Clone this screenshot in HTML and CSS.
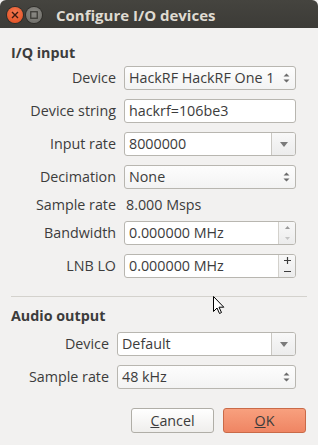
FILE: index.html
```html
<!DOCTYPE html>
<html lang="en">
<head>
    <meta charset="UTF-8">
    <title>Configure I/O devices</title>
    <link rel="stylesheet" href="styles.css">
</head>
<body>
    <div class="titlebar">
        <span class="wbtn wbtn-close">
            <svg width="8" height="8" viewBox="0 0 8 8"><path d="M1 1L7 7M7 1L1 7" stroke="#3a1a10" stroke-width="1.4"/></svg>
        </span>
        <span class="wbtn wbtn-max">
            <svg width="8" height="8" viewBox="0 0 8 8"><rect x="0.75" y="0.75" width="6.5" height="6.5" fill="none" stroke="#3c3b37" stroke-width="1.3"/></svg>
        </span>
        <span class="title">Configure I/O devices</span>
    </div>

    <div class="dialog">
        <section class="group">
            <h2>I/Q input</h2>
            <div class="form form-iq">
                <label>Device</label>
                <div class="field combo">
                    <span class="value">HackRF HackRF One 1</span>
                    <span class="updown">
                        <svg width="7" height="12" viewBox="0 0 7 12"><path d="M0.5 4.5L3.5 1.5L6.5 4.5Z M0.5 7.5L3.5 10.5L6.5 7.5Z" fill="#6b6b6b"/></svg>
                    </span>
                </div>

                <label>Device string</label>
                <div class="field entry"><span class="value">hackrf=106be3</span></div>

                <label>Input rate</label>
                <div class="field entry editcombo">
                    <span class="value">8000000</span>
                    <span class="dropbtn">
                        <svg width="8" height="5" viewBox="0 0 8 5"><path d="M0 0H8L4 5Z" fill="#7a7a7a"/></svg>
                    </span>
                </div>

                <label>Decimation</label>
                <div class="field combo">
                    <span class="value">None</span>
                    <span class="updown">
                        <svg width="7" height="12" viewBox="0 0 7 12"><path d="M0.5 4.5L3.5 1.5L6.5 4.5Z M0.5 7.5L3.5 10.5L6.5 7.5Z" fill="#6b6b6b"/></svg>
                    </span>
                </div>

                <label class="short">Sample rate</label>
                <span class="plain">8.000 Msps</span>

                <label>Bandwidth</label>
                <div class="field entry spin">
                    <span class="value">0.000000 MHz</span>
                    <span class="spinbtns">
                        <span class="sb"><svg width="5" height="3" viewBox="0 0 5 3"><path d="M0 3L2.5 0L5 3Z" fill="#9a9a9a"/></svg></span>
                        <span class="sb"><svg width="5" height="3" viewBox="0 0 5 3"><path d="M0 0L2.5 3L5 0Z" fill="#c4c4c4"/></svg></span>
                    </span>
                </div>

                <label>LNB LO</label>
                <div class="field entry spin">
                    <span class="value">0.000000 MHz</span>
                    <span class="spinbtns">
                        <span class="sb"><svg width="7" height="7" viewBox="0 0 7 7"><path d="M0 3.5H7M3.5 0V7" stroke="#3c3c3c" stroke-width="1.2"/></svg></span>
                        <span class="sb"><svg width="7" height="7" viewBox="0 0 7 7"><path d="M0 3.5H7" stroke="#3c3c3c" stroke-width="1.2"/></svg></span>
                    </span>
                </div>
            </div>
        </section>

        <hr class="sep">

        <section class="group">
            <h2>Audio output</h2>
            <div class="form form-audio">
                <label>Device</label>
                <div class="field entry editcombo">
                    <span class="value">Default</span>
                    <span class="dropbtn">
                        <svg width="8" height="5" viewBox="0 0 8 5"><path d="M0 0H8L4 5Z" fill="#7a7a7a"/></svg>
                    </span>
                </div>

                <label>Sample rate</label>
                <div class="field combo">
                    <span class="value">48 kHz</span>
                    <span class="updown">
                        <svg width="7" height="12" viewBox="0 0 7 12"><path d="M0.5 4.5L3.5 1.5L6.5 4.5Z M0.5 7.5L3.5 10.5L6.5 7.5Z" fill="#6b6b6b"/></svg>
                    </span>
                </div>
            </div>
        </section>

        <div class="buttons">
            <button class="btn"><u>C</u>ancel</button>
            <button class="btn btn-ok"><u>O</u>K</button>
        </div>
    </div>

    <svg class="cursor" width="12" height="19" viewBox="0 0 12 19">
        <path d="M0.5 0.5V15.5L4 12L6.5 17.5L8.5 16.5L6 11.2H10.8Z" fill="#fff" stroke="#000" stroke-width="1" stroke-linejoin="round"/>
    </svg>
</body>
</html>
```

FILE: styles.css
```css
/* Configure I/O devices dialog */
html {
    background-color: #f2f1f0;
}

body {
    margin: 0;
    font-family: "Open Sans", "DejaVu Sans", sans-serif;
    font-size: 14.3px;
    color: #3c3c3c;
    position: relative;
    height: 445px;
    overflow: hidden;
}

/* Window title bar */
.titlebar {
    height: 28px;
    display: flex;
    align-items: center;
    padding-left: 7px;
    background: linear-gradient(#45443f, #3c3b37);
    border-radius: 6px 6px 0 0;
    box-sizing: border-box;
}

.wbtn {
    width: 16px;
    height: 16px;
    border-radius: 50%;
    display: flex;
    align-items: center;
    justify-content: center;
    margin-right: 3px;
    margin-top: 2px;
}

.wbtn-close {
    background: radial-gradient(circle at 50% 35%, #f57a52, #df4a1c);
    box-shadow: 0 0 0 1px #2e2d29;
}

.wbtn-max {
    background: radial-gradient(circle at 50% 35%, #8a8984, #6c6b66);
    box-shadow: 0 0 0 1px #2e2d29;
}

.title {
    margin-left: 11px;
    margin-top: 2px;
    color: #dfdbd2;
    font-weight: bold;
    font-size: 15px;
    line-height: 18px;
}

/* Dialog body */
.dialog {
    padding: 16px 11px 0 11px;
}

.group h2 {
    margin: 0;
    font-size: 14.3px;
    font-weight: bold;
    line-height: 17px;
    color: #3c3c3c;
}

.form {
    display: grid;
    column-gap: 8px;
    row-gap: 9px;
    align-items: center;
    margin-top: 5px;
}

.form-iq {
    grid-template-columns: 105px 172px;
}

.form-audio {
    grid-template-columns: 98px 179px;
    margin-top: 8px;
}

.form label {
    text-align: right;
    white-space: nowrap;
    line-height: 14px;
}

.plain {
    padding-left: 2px;
    line-height: 14px;
}

.field {
    height: 24px;
    box-sizing: border-box;
    border: 1px solid #b8b6b0;
    border-radius: 3px;
    display: flex;
    align-items: center;
    overflow: hidden;
    color: #3c3c3c;
    line-height: 18px;
}

.field .value {
    flex: 1;
    padding-left: 4px;
    white-space: nowrap;
    overflow: hidden;
}

.entry {
    background-color: #fff;
}

.combo {
    background: linear-gradient(#fdfdfd, #f3f3f3);
}

.updown {
    width: 18px;
    display: flex;
    justify-content: center;
}

.dropbtn {
    width: 23px;
    height: 100%;
    border-left: 1px solid #c9c7c2;
    background: linear-gradient(#f8f8f8, #ececec);
    display: flex;
    align-items: center;
    justify-content: center;
}

.spinbtns {
    width: 16px;
    height: 100%;
    border-left: 1px solid #d3d1cc;
    background: linear-gradient(#f8f8f8, #ececec);
    display: flex;
    flex-direction: column;
}

.sb {
    flex: 1;
    display: flex;
    align-items: center;
    justify-content: center;
}

.sep {
    border: none;
    border-top: 1px solid #d4d2cd;
    margin: 18px 0 10px 0;
    width: 296px;
}

.buttons {
    display: flex;
    justify-content: flex-end;
    gap: 9px;
    margin-top: 19px;
    padding-right: 1px;
}

.btn {
    width: 83px;
    height: 25px;
    border-radius: 3px;
    border: 1px solid #b0aea7;
    background: linear-gradient(#ffffff, #efeeec);
    font-family: "Open Sans", "DejaVu Sans", sans-serif;
    font-size: 14.3px;
    color: #3c3c3c;
    padding: 0;
}

.btn-ok {
    border-color: #c96a48;
    background: linear-gradient(#f8a07e, #ef8563);
}

/* mouse pointer drawn over the dialog */
.cursor {
    position: absolute;
    left: 213px;
    top: 296px;
}
```
